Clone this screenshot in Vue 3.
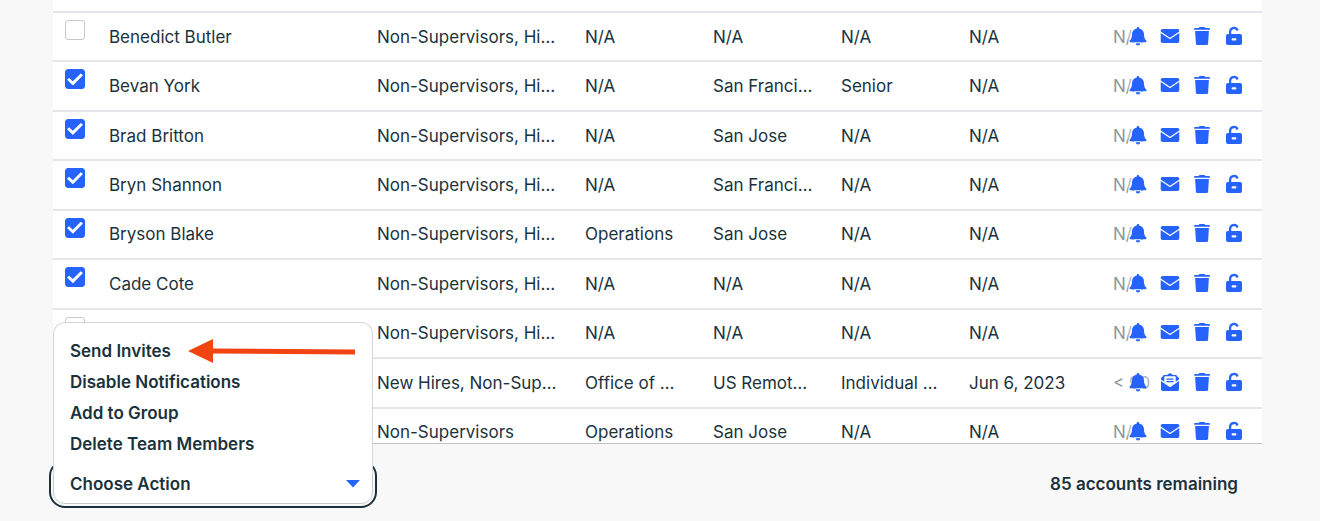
<script setup>
import { ref } from 'vue'

const group = 'Non-Supervisors, Hi…'

const members = ref([
  { name: 'Benedict Butler', groups: group, department: 'N/A', location: 'N/A', level: 'N/A', hired: 'N/A', tenure: 'N/A', checked: false },
  { name: 'Bevan York', groups: group, department: 'N/A', location: 'San Franci…', level: 'Senior', hired: 'N/A', tenure: 'N/A', checked: true },
  { name: 'Brad Britton', groups: group, department: 'N/A', location: 'San Jose', level: 'N/A', hired: 'N/A', tenure: 'N/A', checked: true },
  { name: 'Bryn Shannon', groups: group, department: 'N/A', location: 'San Franci…', level: 'N/A', hired: 'N/A', tenure: 'N/A', checked: true },
  { name: 'Bryson Blake', groups: group, department: 'Operations', location: 'San Jose', level: 'N/A', hired: 'N/A', tenure: 'N/A', checked: true },
  { name: 'Cade Cote', groups: group, department: 'N/A', location: 'N/A', level: 'N/A', hired: 'N/A', tenure: 'N/A', checked: true },
  { name: '', groups: group, department: 'N/A', location: 'N/A', level: 'N/A', hired: 'N/A', tenure: 'N/A', checked: false },
  { name: '', groups: 'New Hires, Non-Sup…', department: 'Office of …', location: 'US Remot…', level: 'Individual …', hired: 'Jun 6, 2023', tenure: '< 90', checked: false, invited: true },
  { name: '', groups: 'Non-Supervisors', department: 'Operations', location: 'San Jose', level: 'N/A', hired: 'N/A', tenure: 'N/A', checked: false }
])

const actions = ['Send Invites', 'Disable Notifications', 'Add to Group', 'Delete Team Members']
</script>

<template>
  <div class="page">
    <div class="table-wrap">
      <table class="members">
        <colgroup>
          <col class="col-check">
          <col class="col-name">
          <col class="col-groups">
          <col class="col-info">
          <col class="col-info">
          <col class="col-info">
          <col class="col-date">
          <col class="col-tenure">
        </colgroup>
        <tbody>
          <tr v-for="(member, i) in members" :key="i">
            <td class="check-cell">
              <input v-model="member.checked" type="checkbox" class="check" :aria-label="member.name || 'Team member'">
            </td>
            <td>{{ member.name }}</td>
            <td>{{ member.groups }}</td>
            <td>{{ member.department }}</td>
            <td>{{ member.location }}</td>
            <td>{{ member.level }}</td>
            <td>{{ member.hired }}</td>
            <td class="tenure">
              <span>{{ member.tenure }}</span>
              <div class="tools">
                <button type="button" aria-label="Notifications">
                  <svg viewBox="0 0 20 20">
                    <path d="M10 1c-.7 0-1.200.5-1.200 1.200v.4C5.900 3.200 4 5.400 4 8.200c0 3.300-.8 4.900-2.200 6.300-.6.700-.2 1.800.8 1.800h14.800c1 0 1.400-1.100.8-1.800C16.800 13.100 16 11.500 16 8.200c0-2.800-1.900-5-4.800-5.600v-.4C11.200 1.500 10.700 1 10 1zM7.800 17.200a2.200 2.200 0 0 0 4.400 0z" />
                  </svg>
                </button>
                <button type="button" aria-label="Send invite">
                  <svg v-if="member.invited" viewBox="0 0 20 20">
                    <path d="M10 1 13 3h2.500c.8 0 1.400.5 1.500 1.300l1.300 1c.4.300.7.800.7 1.300v10.700a1.700 1.700 0 0 1-1.700 1.700H2.700A1.700 1.700 0 0 1 1 17.300V6.600c0-.5.300-1 .7-1.300l1.300-1C3.100 3.500 3.700 3 4.500 3H7z" />
                    <path class="cut" d="M5 4.300h10c.4 0 .7.300.7.700v4.800l3.300-2.300v1.500l-8.200 5.800c-.5.300-1.100.3-1.600 0L1 9V7.500l3.300 2.300V5c0-.4.300-.7.700-.7z" />
                    <path d="M6.500 6.500h7v1.200h-7zM6.500 9h7v1.200h-7z" />
                  </svg>
                  <svg v-else viewBox="0 0 20 20">
                    <path d="M2.500 3h15a1.800 1.800 0 0 1 1.800 1.800v.6L10 11.700.7 5.400v-.6A1.800 1.800 0 0 1 2.500 3zM.7 7l8.600 5.700c.4.300 1 .3 1.400 0L19.300 7v8.200a1.800 1.800 0 0 1-1.800 1.800h-15a1.800 1.800 0 0 1-1.800-1.800z" />
                  </svg>
                </button>
                <button type="button" aria-label="Delete">
                  <svg viewBox="0 0 20 20">
                    <path d="M7.500 1h5l.8 1.100h3.900c.4 0 .7.300.7.700v1H2.100v-1c0-.4.300-.7.700-.7h3.900zM3.100 5h13.800l-.8 12.400c-.1 1-.8 1.700-1.800 1.700H5.700c-1 0-1.700-.7-1.800-1.700z" />
                  </svg>
                </button>
                <button type="button" aria-label="Unlock">
                  <svg viewBox="0 0 20 20">
                    <path fill-rule="evenodd" d="M5 8V5.800a5 5 0 0 1 9.600-1.900l-2 1A2.800 2.800 0 0 0 7.200 5.800V8h8.900A1.900 1.900 0 0 1 18 9.900v7.200a1.900 1.900 0 0 1-1.900 1.900H3.900A1.900 1.900 0 0 1 2 17.100V9.900A1.900 1.900 0 0 1 3.900 8zM8.700 12.300a1.100 1.100 0 0 0 0 2.200h2.600a1.100 1.100 0 0 0 0-2.200z" />
                  </svg>
                </button>
              </div>
            </td>
          </tr>
        </tbody>
      </table>
    </div>

    <footer class="footer">
      <div class="dropdown">
        <div class="menu">
          <ul class="menu-list">
            <li v-for="action in actions" :key="action">
              <button type="button" class="menu-item">{{ action }}</button>
            </li>
          </ul>
          <svg class="arrow" viewBox="0 0 168 26">
            <path d="M0 13 25 1v9.500L167 11.500v5L25 15.500V25z" />
          </svg>
        </div>
        <button type="button" class="toggle">
          Choose Action
          <svg class="caret" viewBox="0 0 14 8">
            <path d="M0 0h14L7 7.500z" />
          </svg>
        </button>
      </div>
      <p class="remaining">85 accounts remaining</p>
    </footer>
  </div>
</template>

<style>
body {
  margin: 0;
  background: #f8f8f8;
}
</style>

<style scoped>
* {
  box-sizing: border-box;
}

.page {
  display: flex;
  flex-direction: column;
  height: 100vh;
  padding: 0 58px 0 53px;
  overflow: hidden;
  font-family: 'Inter', 'Liberation Sans', sans-serif;
  font-size: 17px;
  color: #1b323c;
}

button {
  padding: 0;
  border: 0;
  background: none;
  font: inherit;
  color: inherit;
  cursor: pointer;
}

.table-wrap {
  flex: 1;
  min-height: 0;
  padding-top: 11px;
  overflow: hidden;
  background: #fff;
  border-bottom: 1px solid #bfc2c5;
}

.members {
  width: 100%;
  height: 445px;
  table-layout: fixed;
  border-collapse: separate;
  border-spacing: 0;
}

.col-check {
  width: 44px;
}

.col-name {
  width: 268px;
}

.col-groups {
  width: 208px;
}

.col-info {
  width: 128px;
}

.col-date {
  width: 144px;
}

td {
  padding: 0 0 0 12px;
  border-top: 2px solid #e4e4ea;
  line-height: 24px;
  white-space: nowrap;
}

.check-cell {
  padding-top: 7px;
  vertical-align: top;
}

.check {
  appearance: none;
  display: grid;
  place-items: center;
  width: 20px;
  height: 20px;
  margin: 0;
  border: 1px solid #c6cacc;
  border-radius: 3px;
  background: #fff;
}

.check:checked {
  border-color: #2563fc;
  background: #2563fc;
}

.check:checked::before {
  content: '';
  width: 16px;
  height: 12px;
  background: #fff;
  clip-path: polygon(0 53%, 13% 37%, 36% 66%, 86% 0, 100% 15%, 37% 100%);
}

.tenure {
  position: relative;
}

.tenure span {
  color: #8d989d;
}

.tools {
  position: absolute;
  top: 0;
  right: 0;
  bottom: 0;
  display: flex;
  align-items: center;
  gap: 12px;
  padding: 0 18px 2px 0;
  background: rgba(255, 255, 255, 0.3);
}

.tools button {
  width: 20px;
  height: 20px;
}

.tools svg {
  display: block;
  width: 20px;
  height: 20px;
  fill: #2563fc;
}

.tools .cut {
  fill: #fff;
}

.footer {
  display: flex;
  flex: none;
  align-items: flex-start;
  justify-content: space-between;
  height: 77px;
  padding: 20px 24px 0 0;
  font-weight: 600;
}

.dropdown {
  position: relative;
  width: 320px;
}

.toggle {
  display: flex;
  align-items: center;
  justify-content: space-between;
  width: 100%;
  height: 40px;
  padding: 0 12px 0 16px;
  border: 1px solid #c6cacc;
  border-radius: 12px;
  background: #fff;
  outline: 2px solid #1b323c;
  outline-offset: 2px;
}

.caret {
  width: 14px;
  height: 8px;
  fill: #2563fc;
}

/* overlaps the top of the toggle so both read as one panel */
.menu {
  position: absolute;
  bottom: 28px;
  left: 0;
  z-index: 1;
  width: 100%;
  height: 154px;
  padding: 13px 16px 0;
  border: 1px solid #d3d6dc;
  border-bottom: 0;
  border-radius: 12px 12px 0 0;
  background: #fff;
}

.menu-list {
  margin: 0;
  padding: 0;
  list-style: none;
}

.menu-item {
  display: block;
  height: 31px;
  line-height: 31px;
}

.arrow {
  position: absolute;
  top: 15px;
  left: 134px;
  width: 168px;
  height: 26px;
  fill: #f24313;
}

.remaining {
  margin: 0;
  line-height: 40px;
}
</style>
